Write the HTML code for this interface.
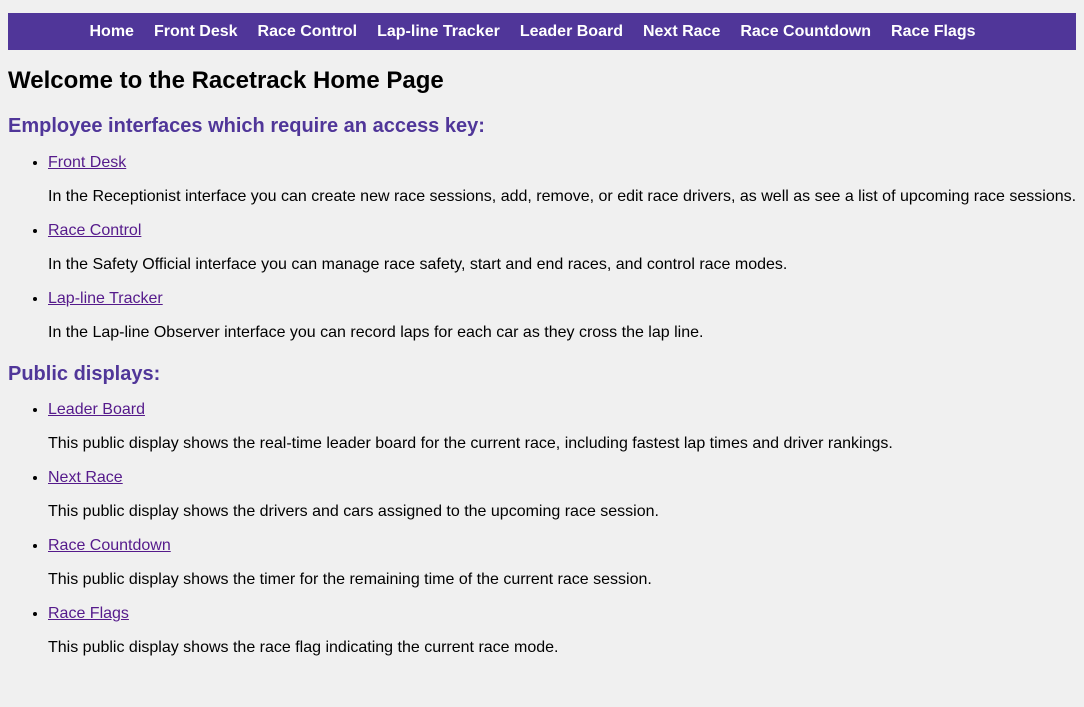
<!DOCTYPE html>
<html><head><meta charset="utf-8"><style>
html,body{margin:0;padding:0;background:#f0f0f0;}
body{font-family:"Liberation Sans",Arial,sans-serif;color:#000;padding:0 8px;width:1068px;height:694px;overflow:hidden;}
nav{margin-top:13px;height:37px;background:#503699;display:flex;justify-content:center;align-items:center;padding-right:19px;box-sizing:border-box;}
nav a{color:#fff;font-weight:bold;font-size:16px;text-decoration:none;margin:0 10px;}
h1{font-size:24px;line-height:28px;margin:17px 0 0;font-weight:bold;}
h2{font-size:20px;line-height:24px;color:#503699;margin:0;font-weight:bold;}
ul{margin:0;padding-left:40px;}
li{font-size:16px;line-height:18px;}
li a{color:#551a8b;text-decoration:underline;}
li p{margin:16px 0 16px;line-height:18px;white-space:nowrap;}
</style></head><body>
<nav><a>Home</a><a>Front Desk</a><a>Race Control</a><a>Lap-line Tracker</a><a>Leader Board</a><a>Next Race</a><a>Race Countdown</a><a>Race Flags</a></nav>
<h1>Welcome to the Racetrack Home Page</h1>
<h2 style="margin-top:19px">Employee interfaces which require an access key:</h2>
<ul style="margin-top:16px">
<li><a>Front Desk</a><p>In the Receptionist interface you can create new race sessions, add, remove, or edit race drivers, as well as see a list of upcoming race sessions.</p></li>
<li><a>Race Control</a><p>In the Safety Official interface you can manage race safety, start and end races, and control race modes.</p></li>
<li><a>Lap-line Tracker</a><p style="margin-bottom:0">In the Lap-line Observer interface you can record laps for each car as they cross the lap line.</p></li>
</ul>
<h2 style="margin-top:20px">Public displays:</h2>
<ul style="margin-top:15px">
<li><a>Leader Board</a><p>This public display shows the real-time leader board for the current race, including fastest lap times and driver rankings.</p></li>
<li><a>Next Race</a><p>This public display shows the drivers and cars assigned to the upcoming race session.</p></li>
<li><a>Race Countdown</a><p>This public display shows the timer for the remaining time of the current race session.</p></li>
<li><a>Race Flags</a><p>This public display shows the race flag indicating the current race mode.</p></li>
</ul>
</body></html>
